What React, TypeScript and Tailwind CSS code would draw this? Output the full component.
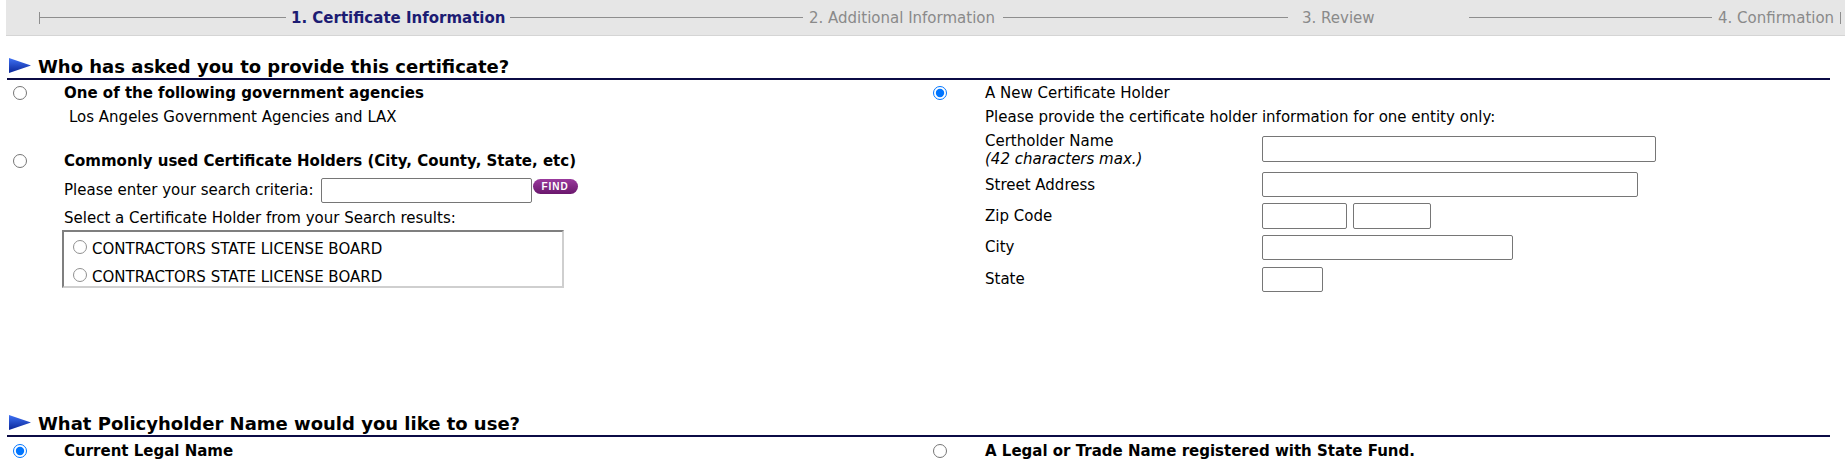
import React from "react";

const Triangle = ({ gid }: { gid: string }) => (
  <svg width="22" height="15" viewBox="0 0 22 15" className="block shrink-0">
    <defs>
      <linearGradient id={gid} x1="0" y1="0" x2="0" y2="1">
        <stop offset="0" stopColor="#3f72f5" />
        <stop offset="1" stopColor="#0a2597" />
      </linearGradient>
    </defs>
    <polygon points="0,0 22,7.5 0,15" fill={`url(#${gid})`} />
  </svg>
);

const SectionHeading = ({ title, gid }: { title: string; gid: string }) => (
  <div className="flex items-end h-[24px] border-b-2 border-[#0b0b45]">
    <div className="w-[31px] pl-[2px] pb-[5px]">
      <Triangle gid={gid} />
    </div>
    <h2 className="text-[18px] font-bold leading-[22px]">{title}</h2>
  </div>
);

const Radio = ({ name, checked }: { name: string; checked?: boolean }) => (
  <input
    type="radio"
    name={name}
    defaultChecked={checked}
    className="m-0 w-[14px] h-[14px] block"
  />
);

const TextBox = ({ className }: { className: string }) => (
  <input
    type="text"
    className={`border border-[#767676] rounded-[2px] bg-white ${className}`}
  />
);

const StepLine = ({ className }: { className: string }) => (
  <div className={`h-px bg-[#8e8e8e] ${className}`} />
);

const App: React.FC = () => {
  return (
    <div className="w-full h-[461px] overflow-hidden bg-white text-black text-[15px] leading-[24px] font-['DejaVu_Sans',Verdana,sans-serif]">
      {/* Step header */}
      <div className="ml-[6px] h-[36px] bg-[#e6e6e6] border-b border-[#d5d5d5] flex items-center pl-[33px]">
        <div className="w-[252px] flex items-center pr-[5px]">
          <div className="w-px h-[12px] bg-[#8e8e8e]" />
          <StepLine className="flex-1" />
        </div>
        <div className="w-[219px] font-bold text-[#1c1c73] whitespace-nowrap">
          1. Certificate Information
        </div>
        <div className="w-[299px] flex items-center pr-[6px]">
          <StepLine className="flex-1" />
        </div>
        <div className="w-[194px] text-[#8a8a8a] whitespace-nowrap">
          2. Additional Information
        </div>
        <div className="w-[299px] flex items-center pr-[14px]">
          <StepLine className="flex-1" />
        </div>
        <div className="w-[167px] text-[#8a8a8a] whitespace-nowrap">3. Review</div>
        <div className="w-[249px] flex items-center pr-[6px]">
          <StepLine className="flex-1" />
        </div>
        <div className="w-[122px] text-[#8a8a8a] whitespace-nowrap">4. Confirmation</div>
        <div className="w-px h-[12px] bg-[#8e8e8e]" />
      </div>

      <div className="ml-[7px] w-[1823px]">
        {/* Section 1 */}
        <div className="mt-[20px]">
          <SectionHeading gid="tri1" title="Who has asked you to provide this certificate?" />
        </div>
        <div className="grid grid-cols-[913px_1fr] pt-[1px]">
          {/* left column */}
          <div>
            <div className="flex items-center h-[24px]">
              <div className="w-[57px] pl-[6px]">
                <Radio name="who" />
              </div>
              <span className="font-bold">One of the following government agencies</span>
            </div>
            <div className="h-[24px] pl-[62px]">Los Angeles Government Agencies and LAX</div>

            <div className="flex items-center h-[24px] mt-[20px]">
              <div className="w-[57px] pl-[6px]">
                <Radio name="who" />
              </div>
              <span className="font-bold">
                Commonly used Certificate Holders (City, County, State, etc)
              </span>
            </div>
            <div className="flex items-start h-[27px] mt-[4px] pl-[57px]">
              <span className="leading-[27px]">Please enter your search criteria:</span>
              <TextBox className="ml-[7px] mt-[1px] w-[211px] h-[25px]" />
              <button className="ml-[1px] mt-[2px] w-[45px] h-[15px] rounded-full bg-gradient-to-b from-[#9a3a9d] to-[#6a176d] text-white text-[10px] leading-[15px] font-bold tracking-[1px] font-['Liberation_Sans',Arial,sans-serif]">
                FIND
              </button>
            </div>
            <div className="h-[24px] mt-[2px] pl-[57px]">
              Select a Certificate Holder from your Search results:
            </div>
            <div className="ml-[55px] w-[502px] h-[58px] overflow-hidden border-2 border-t-[#7f7f7f] border-l-[#7f7f7f] border-r-[#cfcfcf] border-b-[#cfcfcf] pt-[3px] pl-[9px]">
              {["CONTRACTORS STATE LICENSE BOARD", "CONTRACTORS STATE LICENSE BOARD"].map(
                (name, i) => (
                  <div key={i} className="flex items-center h-[28px]">
                    <input
                      type="radio"
                      name="holder"
                      className="m-0 w-[14px] h-[14px] block -mt-[5px] opacity-80"
                    />
                    <span className="ml-[5px]">{name}</span>
                  </div>
                )
              )}
            </div>
          </div>

          {/* right column */}
          <div>
            <div className="flex items-center h-[24px]">
              <div className="w-[65px] pl-[13px]">
                <Radio name="who" checked />
              </div>
              <span>A New Certificate Holder</span>
            </div>
            <div className="h-[24px] pl-[65px]">
              Please provide the certificate holder information for one entity only:
            </div>
            <div className="pl-[65px]">
              <div className="grid grid-cols-[277px_1fr] items-center h-[40px]">
                <div className="leading-[18px] pt-[1px]">
                  <div>Certholder Name</div>
                  <div className="italic">(42 characters max.)</div>
                </div>
                <TextBox className="w-[394px] h-[26px]" />
              </div>
              <div className="grid grid-cols-[277px_1fr] items-center h-[31px]">
                <div>Street Address</div>
                <TextBox className="w-[376px] h-[25px]" />
              </div>
              <div className="grid grid-cols-[277px_1fr] items-center h-[31px]">
                <div>Zip Code</div>
                <div className="flex gap-[6px]">
                  <TextBox className="w-[85px] h-[26px]" />
                  <TextBox className="w-[78px] h-[26px]" />
                </div>
              </div>
              <div className="grid grid-cols-[277px_1fr] items-center h-[32px]">
                <div>City</div>
                <TextBox className="w-[251px] h-[25px]" />
              </div>
              <div className="grid grid-cols-[277px_1fr] items-center h-[32px]">
                <div>State</div>
                <TextBox className="w-[61px] h-[25px]" />
              </div>
            </div>
          </div>
        </div>

        {/* Section 2 */}
        <div className="mt-[118px]">
          <SectionHeading gid="tri2" title="What Policyholder Name would you like to use?" />
        </div>
        <div className="grid grid-cols-[913px_1fr] pt-[2px]">
          <div className="flex items-center h-[24px]">
            <div className="w-[57px] pl-[6px]">
              <Radio name="policy" checked />
            </div>
            <span className="font-bold">Current Legal Name</span>
          </div>
          <div className="flex items-center h-[24px]">
            <div className="w-[65px] pl-[13px]">
              <Radio name="policy" />
            </div>
            <span className="font-bold">A Legal or Trade Name registered with State Fund.</span>
          </div>
        </div>
      </div>
    </div>
  );
};

export default App;
